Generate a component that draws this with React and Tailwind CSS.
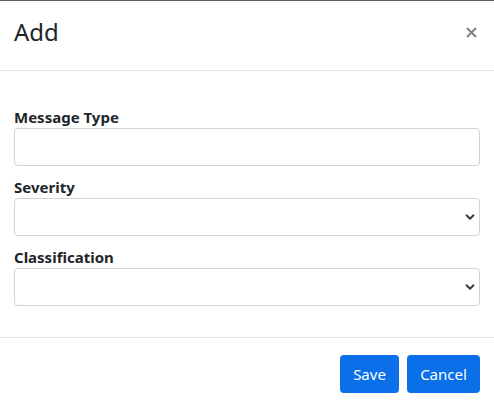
import { useState } from "react";

function Chevron() {
  return (
    <svg
      width="10"
      height="7"
      viewBox="0 0 10 7"
      fill="none"
      className="pointer-events-none absolute right-[5px] top-1/2 -translate-y-1/2"
    >
      <path d="M1.5 1.8 5 5.2l3.5-3.4" stroke="#343a40" strokeWidth="1.9" strokeLinecap="round" strokeLinejoin="round" />
    </svg>
  );
}

function Field({ label, children }) {
  return (
    <div className="flex flex-col">
      <label className="block text-[15px] leading-[22px] font-bold text-[#212529]">{label}</label>
      {children}
    </div>
  );
}

export default function App() {
  const [form, setForm] = useState({ messageType: "", severity: "", classification: "" });

  const handleChange = (e) => {
    const { name, value } = e.target;
    setForm((prev) => ({ ...prev, [name]: value }));
  };

  return (
    <div className="w-[494px] h-[407px] bg-white border-t border-[#5a5a5a] overflow-hidden font-['Noto_Sans','Open_Sans',sans-serif] text-[#212529]">
      {/* Header */}
      <div className="flex items-start justify-between h-[70px] px-[14px] pt-[13px] border-b border-[#e5e5e5]">
        <h4 className="text-[24px] leading-[36px] font-normal text-[#212529]">Add</h4>
        <button type="button" className="w-[12px] h-[12px] mt-[12px] mr-[3px] flex items-center justify-center">
          <svg width="11" height="11" viewBox="0 0 11 11">
            <path d="M1 1l9 9M10 1l-9 9" stroke="#808080" strokeWidth="2" />
          </svg>
        </button>
      </div>

      {/* Body */}
      <form className="flex flex-col gap-[10px] px-[14px] pt-[35px] pb-[31px] border-b border-[#e5e5e5]">
        <Field label="Message Type">
          <input
            type="text"
            name="messageType"
            value={form.messageType}
            onChange={handleChange}
            className="h-[38px] w-full px-3 bg-white border border-[#ced4da] rounded-[4px] text-base outline-none"
          />
        </Field>
        <Field label="Severity">
          <div className="relative">
            <select
              name="severity"
              value={form.severity}
              onChange={handleChange}
              className="appearance-none h-[38px] w-full px-3 bg-white border border-[#ced4da] rounded-[4px] text-base outline-none"
            >
              <option value=""></option>
            </select>
            <Chevron />
          </div>
        </Field>
        <Field label="Classification">
          <div className="relative">
            <select
              name="classification"
              value={form.classification}
              onChange={handleChange}
              className="appearance-none h-[38px] w-full px-3 bg-white border border-[#ced4da] rounded-[4px] text-base outline-none"
            >
              <option value=""></option>
            </select>
            <Chevron />
          </div>
        </Field>
      </form>

      {/* Footer */}
      <div className="flex justify-end gap-[8px] px-[14px] pt-[17px]">
        <button type="button" className="h-[38px] w-[59px] rounded-[4px] bg-[#0a6fe8] text-white text-[15px]">
          Save
        </button>
        <button type="button" className="h-[38px] w-[73px] rounded-[4px] bg-[#0a6fe8] text-white text-[15px]">
          Cancel
        </button>
      </div>
    </div>
  );
}
